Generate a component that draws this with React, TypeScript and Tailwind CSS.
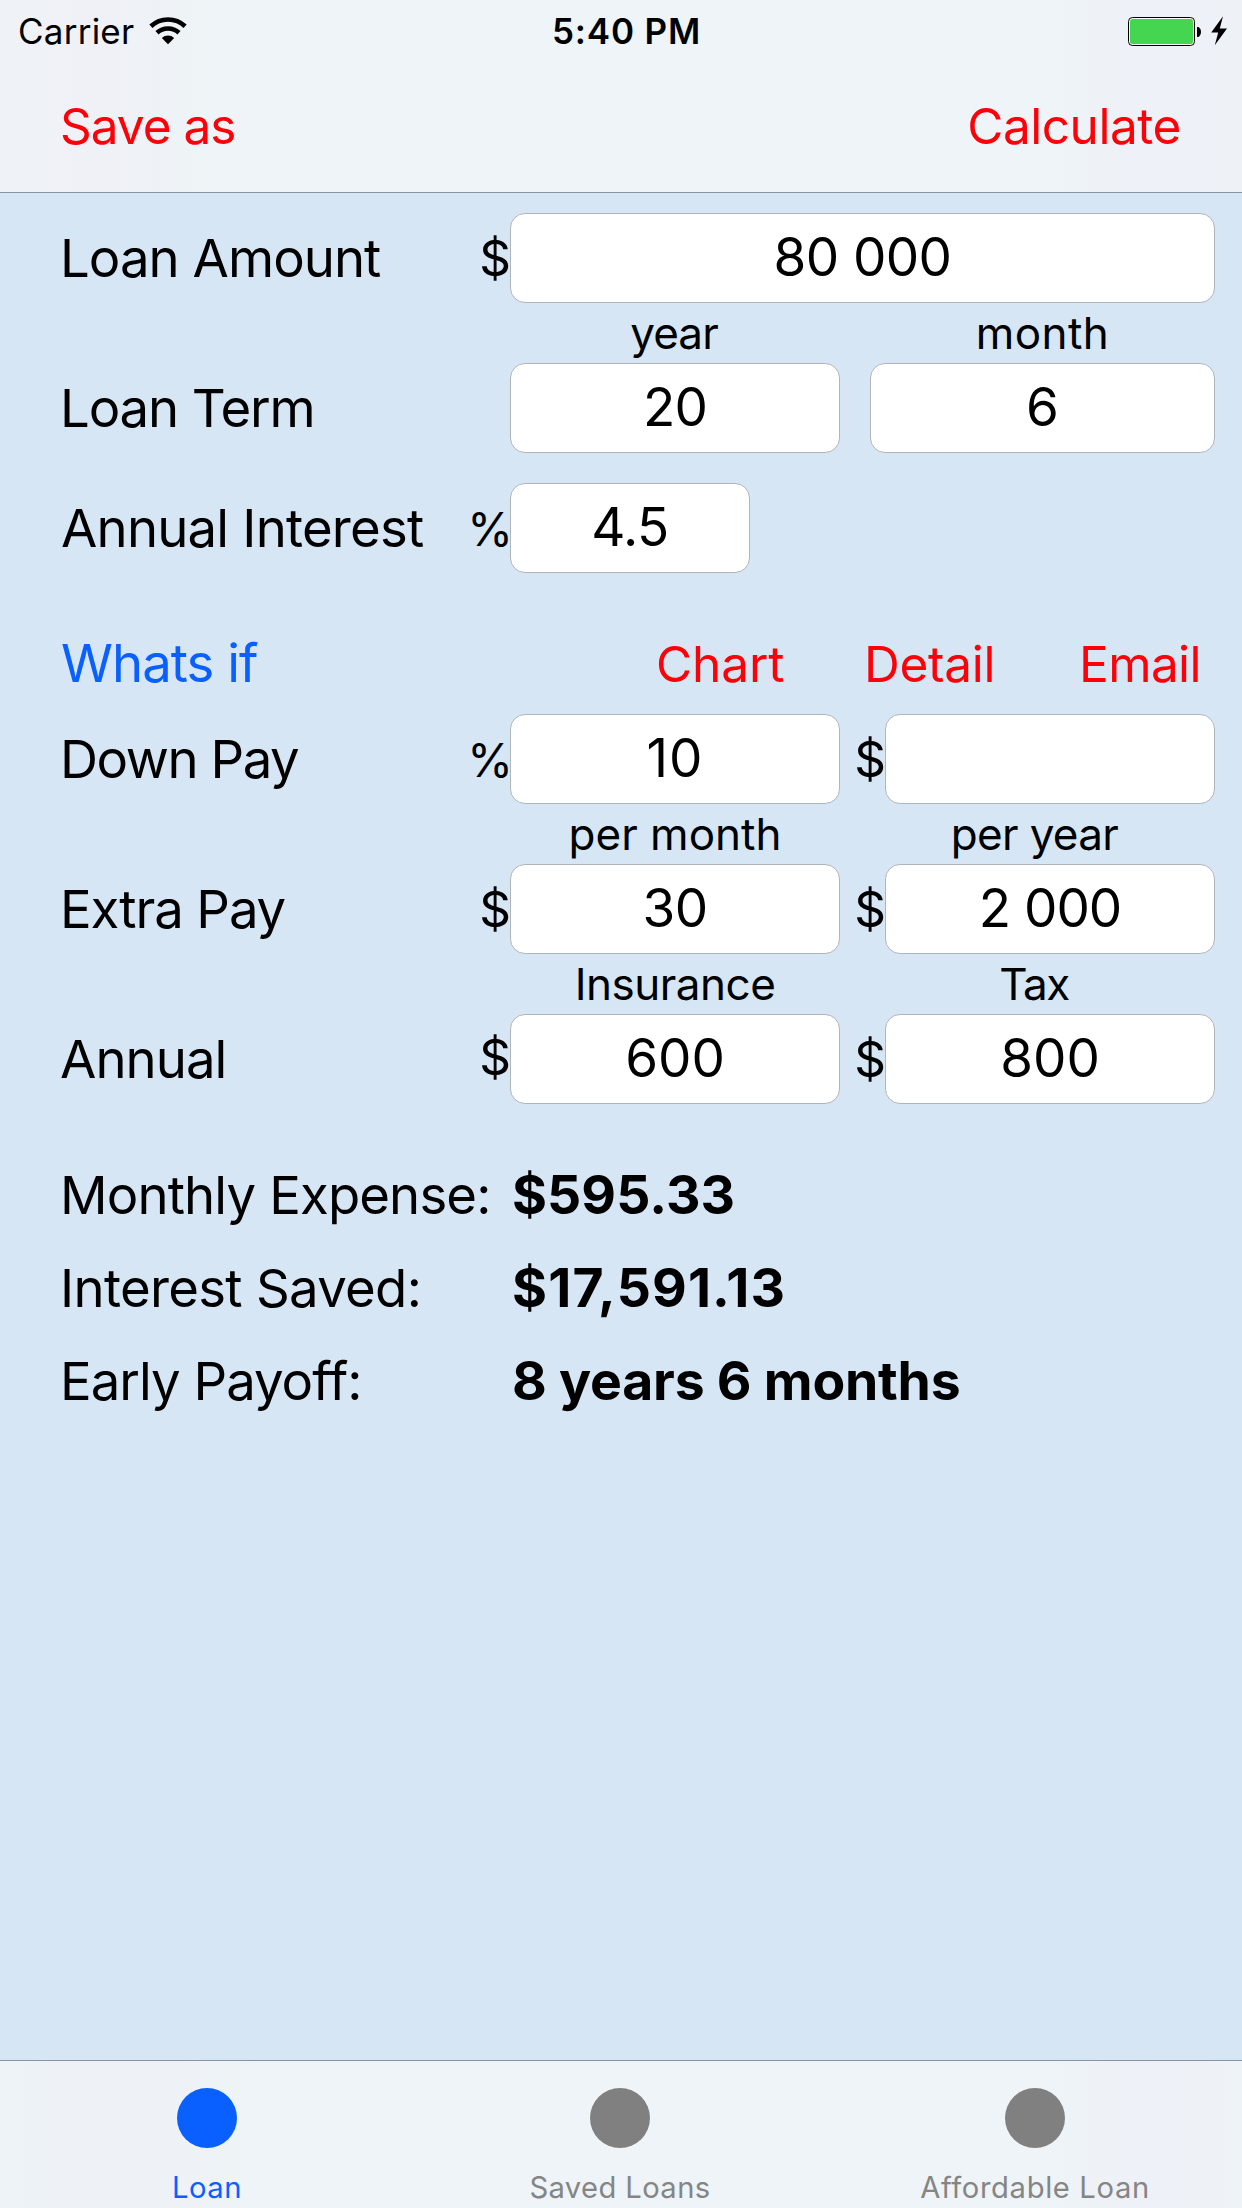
import type { ReactNode } from "react";

function Wifi() {
  return (
    <svg className="ml-[15px] h-[28px] w-[38px]" viewBox="0 0 38 28" fill="none">
      <path d="M1.9 9.2a25 25 0 0 1 34.2 0" stroke="#000" strokeWidth="4.6" />
      <path d="M8 15.8a16.2 16.2 0 0 1 22 0" stroke="#000" strokeWidth="4.6" />
      <path d="M19 27.300l-6.200-6.300a9 9 0 0 1 12.400 0z" fill="#000" />
    </svg>
  );
}

function Battery() {
  return (
    <svg className="h-[30px] w-[100px]" viewBox="0 0 100 30">
      <rect x="0.5" y="1.5" width="66" height="28" rx="4" fill="#fff" stroke="#000" />
      <rect x="2" y="3" width="63" height="25" rx="2.5" fill="#44d551" />
      <path d="M69 11h1.500c1.600 1.200 2.500 2.800 2.500 5s-.9 3.800-2.500 5H69z" fill="#000" />
      <path d="M95 0.200 83.200 16.500h7L86.800 29.200 99 12.500h-7.200z" fill="#000" />
    </svg>
  );
}

function Field({ value, className }: { value: string; className: string }) {
  return (
    <div
      className={`flex h-[90px] items-center justify-center rounded-[15px] border border-[#b0b5ba] bg-white pb-[2px] text-[53px] leading-[60px] ${className}`}
    >
      {value}
    </div>
  );
}

function Label({ children, className }: { children: ReactNode; className: string }) {
  return <div className={`w-[390px] shrink-0 whitespace-nowrap text-[52.7px] leading-[60px] ${className}`}>{children}</div>;
}

function Sign({ children, className }: { children?: ReactNode; className: string }) {
  return <div className={`flex shrink-0 justify-end leading-[60px] ${className}`}>{children}</div>;
}

function Row({ children }: { children: ReactNode }) {
  return <div className="flex h-[90px] items-center pl-[60px]">{children}</div>;
}

function Captions({ children }: { children: ReactNode }) {
  return <div className="flex h-[60px] items-center pl-[510px] text-center text-[44px] leading-[60px]">{children}</div>;
}

function Result({ label, value, labelClass, valueClass }: { label: string; value: string; labelClass: string; valueClass: string }) {
  return (
    <div className="flex h-[93px] items-center whitespace-nowrap pl-[60px] text-[52.7px] leading-[60px]">
      <div className={`w-[452px] ${labelClass}`}>{label}</div>
      <div className={`text-[53.5px] font-bold ${valueClass}`}>{value}</div>
    </div>
  );
}

function Tab({ label, className, dot }: { label: string; className: string; dot: string }) {
  return (
    <div className={`flex flex-col items-center ${className}`}>
      <div className={`mt-[27px] size-[60px] rounded-full ${dot}`} />
      <div className="mt-[20px] whitespace-nowrap text-[29.2px] leading-[40px]">{label}</div>
    </div>
  );
}

export default function App() {
  return (
    <div className="flex h-[2208px] w-[1242px] flex-col overflow-hidden bg-[#d6e6f5] font-[Inter,sans-serif] text-black">
      <header className="h-[193px] shrink-0 border-b border-[#8793a0] bg-[linear-gradient(90deg,#eff3f7_0%,#eff1f6_8%,#eef4f7_18%,#eef4f7_84%,#eef1f7_92%,#eef2f7_100%)]">
        <div className="grid h-[62px] grid-cols-3 items-center text-[35px] leading-[42px]">
          <div className="flex items-center pl-[18px] tracking-[0.24px]">
            Carrier
            <Wifi />
          </div>
          <div className="pl-[11px] text-center font-semibold tracking-[0.84px]">5:40 PM</div>
          <div className="flex justify-end pr-[14px]">
            <Battery />
          </div>
        </div>
        <div className="flex h-[128px] items-center justify-between pl-[60px] pr-[61px] text-[49.5px] leading-[60px] text-[#ff0008]">
          <div className="tracking-[-1.000px]">Save as</div>
          <div className="tracking-[-0.450px]">Calculate</div>
        </div>
      </header>

      <main className="flex-1 pt-[20px]">
        <Row>
          <Label className="tracking-[-0.970px]">Loan Amount</Label>
          <Sign className="-mr-px w-[61px] text-[49.5px]">$</Sign>
          <Field value="80 000" className="w-[705px] tracking-[-0.600px]" />
        </Row>
        <Captions>
          <div className="w-[328px] tracking-[-0.890px]">year</div>
          <div className="ml-[32px] w-[345px] tracking-[0.400px]">month</div>
        </Captions>
        <Row>
          <Label className="tracking-[-1.150px]">Loan Term</Label>
          <Sign className="w-[60px]" />
          <Field value="20" className="w-[330px] tracking-[-0.800px]" />
          <Field value="6" className="ml-[30px] w-[345px]" />
        </Row>
        <div className="h-[30px]" />
        <Row>
          <Label className="pl-px tracking-[-0.800px]">Annual Interest</Label>
          <Sign className="-mr-[3px] w-[63px] pt-[2px] text-[46.5px]">%</Sign>
          <Field value="4.5" className="w-[240px] tracking-[-0.500px]" />
        </Row>

        <div className="mt-[60px] mb-[21px] flex h-[60px] items-baseline pl-[61px] text-[49.5px] leading-[60px] text-[#ff0008]">
          <div className="w-[595px] text-[52.7px] tracking-[-0.950px] text-[#0a60ff]">Whats if</div>
          <div className="w-[208px] tracking-[-0.100px]">Chart</div>
          <div className="w-[215px] tracking-[-0.250px]">Detail</div>
          <div className="tracking-[-0.600px]">Email</div>
        </div>

        <Row>
          <Label className="tracking-[-1.450px]">Down Pay</Label>
          <Sign className="-mr-[3px] w-[63px] pt-[2px] text-[46.5px]">%</Sign>
          <Field value="10" className="w-[330px] tracking-[1px]" />
          <Sign className="-mr-px w-[46px] text-[49.5px]">$</Sign>
          <Field value="" className="w-[330px]" />
        </Row>
        <Captions>
          <div className="w-[330px]">per month</div>
          <div className="ml-[15px] w-[359px] tracking-[-0.650px]">per year</div>
        </Captions>
        <Row>
          <Label className="tracking-[-1.100px]">Extra Pay</Label>
          <Sign className="-mr-px w-[61px] text-[49.5px]">$</Sign>
          <Field value="30" className="w-[330px] tracking-[-0.700px]" />
          <Sign className="-mr-px w-[46px] text-[49.5px]">$</Sign>
          <Field value="2 000" className="w-[330px] tracking-[-1px]" />
        </Row>
        <Captions>
          <div className="w-[330px] tracking-[-0.500px]">Insurance</div>
          <div className="ml-[15px] w-[358px] tracking-[-1.400px]">Tax</div>
        </Captions>
        <Row>
          <Label className="tracking-[-0.970px]">Annual</Label>
          <Sign className="-mr-px w-[61px] pb-[5px] text-[49.5px]">$</Sign>
          <Field value="600" className="w-[330px]" />
          <Sign className="-mr-px w-[46px] text-[49.5px]">$</Sign>
          <Field value="800" className="w-[330px]" />
        </Row>

        <div className="mt-[44px]">
          <Result label="Monthly Expense:" value="$595.33" labelClass="tracking-[-0.870px]" valueClass="tracking-[0.070px]" />
          <Result label="Interest Saved:" value="$17,591.13" labelClass="tracking-[-0.700px]" valueClass="tracking-[1.150px]" />
          <Result label="Early Payoff:" value="8 years 6 months" labelClass="tracking-[-0.980px]" valueClass="tracking-[-0.220px]" />
        </div>
      </main>

      <nav className="flex h-[148px] shrink-0 border-t border-[#8793a0] bg-[linear-gradient(90deg,#edf3f7_0%,#eef1f6_10%,#eef4f7_22%,#eef4f7_84%,#eef1f7_92%,#eef3f7_100%)]">
        <Tab label="Loan" dot="bg-[#0a60ff]" className="w-[414px] text-[#0a60ff] tracking-[0.500px]" />
        <Tab label="Saved Loans" dot="bg-[#808080]" className="w-[412px] text-[#858585] tracking-[0.380px]" />
        <Tab label="Affordable Loan" dot="bg-[#808080]" className="ml-[2px] w-[414px] text-[#858585] tracking-[0.630px]" />
      </nav>
    </div>
  );
}
